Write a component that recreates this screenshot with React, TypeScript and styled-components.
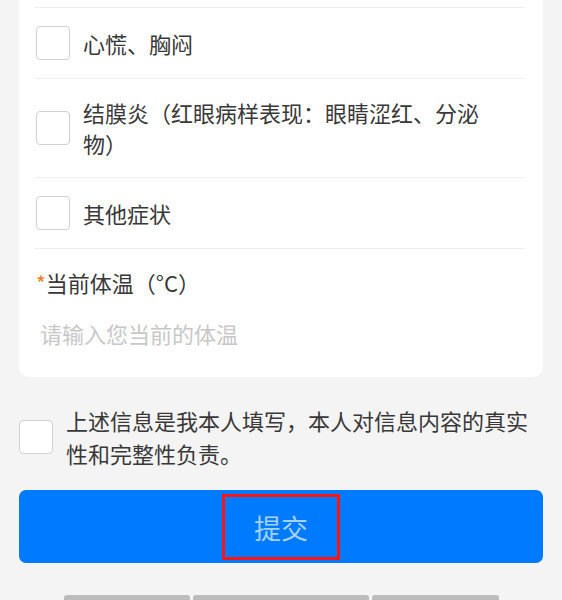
import React from "react";
import styled, { createGlobalStyle } from "styled-components";

const GlobalStyle = createGlobalStyle`
  * {
    box-sizing: border-box;
  }
  body {
    margin: 0;
    background: #f4f4f4;
    font-family: "Noto Sans CJK SC", "Noto Sans", sans-serif;
    color: #333;
  }
`;

const symptoms = [
  "心慌、胸闷",
  "结膜炎（红眼病样表现：眼睛涩红、分泌物）",
  "其他症状",
];

const App = () => {
  return (
    <Page>
      <GlobalStyle />
      <Card>
        {symptoms.map((s) => (
          <OptionRow key={s}>
            <Box />
            <OptionText>{s}</OptionText>
          </OptionRow>
        ))}
        <Field>
          <Label>
            <Star>*</Star>当前体温（°C）
          </Label>
          <Input placeholder="请输入您当前的体温" />
        </Field>
      </Card>
      <Statement>
        <Box />
        <StatementText>
          上述信息是我本人填写，本人对信息内容的真实性和完整性负责。
        </StatementText>
      </Statement>
      <SubmitButton>
        <Highlight>提交</Highlight>
      </SubmitButton>
      <Tabs>
        <Tab $w={126} />
        <Tab $w={176} />
        <Tab $w={127} />
      </Tabs>
    </Page>
  );
};

export default App;

const Page = styled.div`
  height: 600px;
  overflow: hidden;
  padding: 0 19px;
`;

const Card = styled.div`
  background: #fff;
  border-radius: 0 0 10px 10px;
  padding: 7px 18px 0 15px;
`;

const OptionRow = styled.div`
  display: flex;
  align-items: center;
  gap: 13px;
  border-top: 1px solid #efefef;
  padding: 18px 30px 18px 2px;
`;

const Box = styled.span`
  flex: none;
  width: 34px;
  height: 34px;
  border: 1.5px solid #d2d2d2;
  border-radius: 4px;
  background: #fff;
`;

const OptionText = styled.span`
  font-size: 22px;
  line-height: 31px;
  color: #383838;
`;

const Field = styled.div`
  border-top: 1px solid #efefef;
  padding: 18px 0 22px 2px;
`;

const Label = styled.div`
  font-size: 22px;
  line-height: 31px;
  color: #383838;
`;

const Star = styled.span`
  color: #f07a2a;
  font-size: 21px;
`;

const Input = styled.input`
  display: block;
  width: 100%;
  height: 44px;
  margin-top: 12px;
  padding: 0 4px;
  border: none;
  outline: none;
  background: transparent;
  font-family: inherit;
  font-size: 22px;
  color: #333;

  &::placeholder {
    color: #c8c8c8;
  }
`;

const Statement = styled.div`
  display: flex;
  align-items: center;
  gap: 13px;
  margin-top: 27px;
`;

const StatementText = styled.span`
  font-size: 22px;
  line-height: 33px;
  color: #383838;
`;

const SubmitButton = styled.button`
  display: flex;
  align-items: center;
  justify-content: center;
  width: 100%;
  height: 73px;
  margin-top: 20px;
  border: none;
  border-radius: 7px;
  background: #007aff;
  font-family: inherit;
  padding: 0;
`;

const Highlight = styled.span`
  display: flex;
  align-items: center;
  justify-content: center;
  width: 118px;
  height: 66px;
  border: 3px solid #ff1414;
  font-size: 27px;
  color: #a3d2f7;
  padding-top: 2px;
`;

const Tabs = styled.div`
  display: flex;
  justify-content: center;
  gap: 3px;
  margin-top: 32px;
`;

const Tab = styled.span<{ $w: number }>`
  width: ${(p) => p.$w}px;
  height: 12px;
  background: #bcbcbc;
  border-radius: 3px 3px 0 0;
`;
